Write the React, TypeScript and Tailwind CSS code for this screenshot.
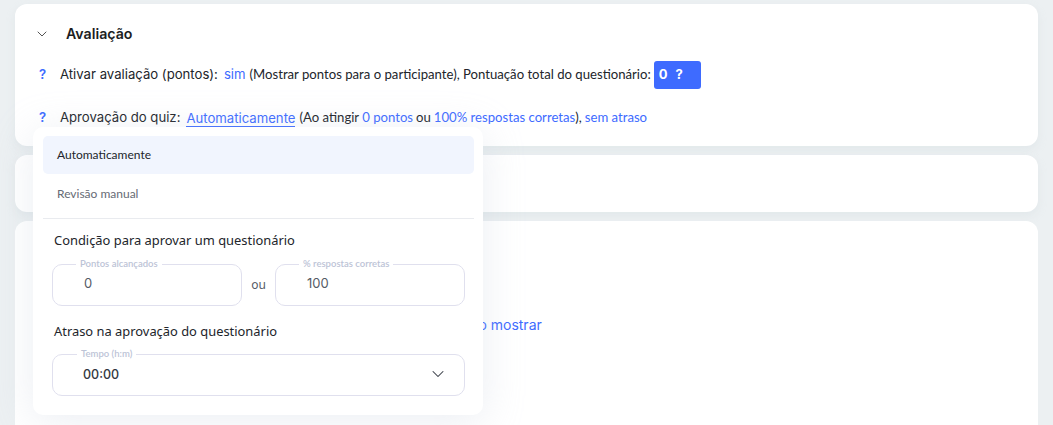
import { ChevronDown } from 'lucide-react';

const lato = { fontFamily: 'Lato, sans-serif' };
const inter = { fontFamily: 'Inter, sans-serif' };
const noto = { fontFamily: '"Noto Sans", sans-serif' };

function Help() {
  return <span className="w-[21px] shrink-0 font-semibold text-[#3e6bff]" style={inter}>?</span>;
}

function Field({ label, value, className }: { label: string; value: string; className: string }) {
  return (
    <fieldset className={`h-[47px] rounded-[10px] border border-[#e0e0ee] pl-[23px] ${className}`}>
      <legend className="px-[4px] text-[9.5px] font-semibold leading-[10px] text-[#bcc3d6]" style={lato}>{label}</legend>
      <div className="pl-[8px] pt-[2px] text-[13px] leading-[24px] text-[#555b66]" style={inter}>{value}</div>
    </fieldset>
  );
}

export default function App() {
  return (
    <div className="relative h-[425px] w-[1053px] overflow-hidden bg-[#ecf0f2] px-[15px] pt-[4px] text-[13.15px] text-[#22252b]" style={lato}>
      <div className="flex flex-col gap-[9px]">
        <section className="h-[142px] rounded-[12px] bg-white pl-[22px] pt-[21px] shadow-[0_4px_8px_rgba(200,210,215,0.25)]">
          <div className="-ml-[3px] flex h-[18px] items-center">
            <ChevronDown size={16} strokeWidth={1.25} className="text-[#333]" />
            <h2 className="ml-[16px] text-[14.2px] font-semibold text-[#1b1d22]" style={inter}>Avaliação</h2>
          </div>
          <div className="mt-[18px] flex h-[28px] items-center whitespace-nowrap pl-[2px]">
            <Help />
            <span style={inter}>Ativar avaliação (pontos):</span>
            <span className="ml-[6px] text-[#3e6bff]" style={inter}>sim</span>
            <span className="ml-[4px]">(Mostrar pontos para o participante), Pontuação total do questionário:</span>
            <span className="ml-[3px] flex h-[28px] w-[47px] items-center rounded-[3px] bg-[#3e6bff] pl-[5px] text-[13px] font-bold text-white" style={inter}>
              0<span className="ml-[8px]">?</span>
            </span>
          </div>
          <div className="mt-[15px] flex h-[28px] items-center whitespace-nowrap pl-[2px]">
            <Help />
            <span style={inter}>Aprovação do quiz:</span>
            <span className="ml-[6px] border-b border-[#3e6bff] leading-[16px] text-[#3e6bff]" style={inter}>Automaticamente</span>
            <span className="ml-[4px]">(Ao atingir</span>
            <span className="ml-[3px] text-[#3e6bff]">0 pontos</span>
            <span className="ml-[3px]">ou</span>
            <span className="ml-[3px] text-[#3e6bff]">100% respostas corretas</span>
            <span>),</span>
            <span className="ml-[3px] text-[#3e6bff]">sem atraso</span>
          </div>
        </section>
        <section className="h-[57px] rounded-[12px] bg-white shadow-[0_4px_8px_rgba(200,210,215,0.25)]" />
        <section className="h-[220px] rounded-[12px] bg-white pl-[445px] pt-[93px]">
          <span className="text-[14px] text-[#3e6bff]" style={inter}>Não mostrar</span>
        </section>
      </div>

      {/* Approval dropdown */}
      <div className="absolute left-[33px] top-[127px] h-[288px] w-[450px] rounded-[10px] bg-white p-[9px] shadow-[0_6px_40px_rgba(190,200,215,0.3)]">
        <div className="ml-[1px] flex h-[38px] w-[431px] items-center rounded-[5px] bg-[#f1f5fe] pl-[14px] text-[12px] text-[#22252b]">Automaticamente</div>
        <div className="flex h-[40px] items-center pl-[15px] text-[12px] text-[#666b75]">Revisão manual</div>
        <div className="ml-[1px] mt-[4px] w-[431px] border-t border-[#e9ebef]" />
        <h3 className="ml-[12px] mt-[12px] text-[12.9px] leading-[18px] text-[#22252b]" style={noto}>Condição para aprovar um questionário</h3>
        <div className="ml-[10px] mt-[10px] flex w-[413px] items-end">
          <Field label="Pontos alcançados" value="0" className="w-[190px]" />
          <span className="w-[33px] pb-[12px] text-center text-[12px] text-[#555b66]" style={noto}>ou</span>
          <Field label="% respostas corretas" value="100" className="w-[190px]" />
        </div>
        <h3 className="ml-[12px] mt-[16px] text-[12.9px] leading-[18px] text-[#22252b]" style={noto}>Atraso na aprovação do questionário</h3>
        <div className="relative ml-[10px] mt-[9px] w-[413px]">
          <fieldset className="h-[47px] rounded-[10px] border border-[#e0e0ee] pl-[24px]">
            <legend className="px-[4px] text-[9.5px] font-semibold leading-[10px] text-[#bcc3d6]">Tempo (h:m)</legend>
            <div className="pl-[6px] pt-[4px] text-[12.5px] font-medium leading-[24px] text-[#333842]" style={inter}>00:00</div>
          </fieldset>
          <ChevronDown size={20} strokeWidth={1.25} className="absolute right-[17px] top-[15px] text-[#333842]" />
        </div>
      </div>
    </div>
  );
}
